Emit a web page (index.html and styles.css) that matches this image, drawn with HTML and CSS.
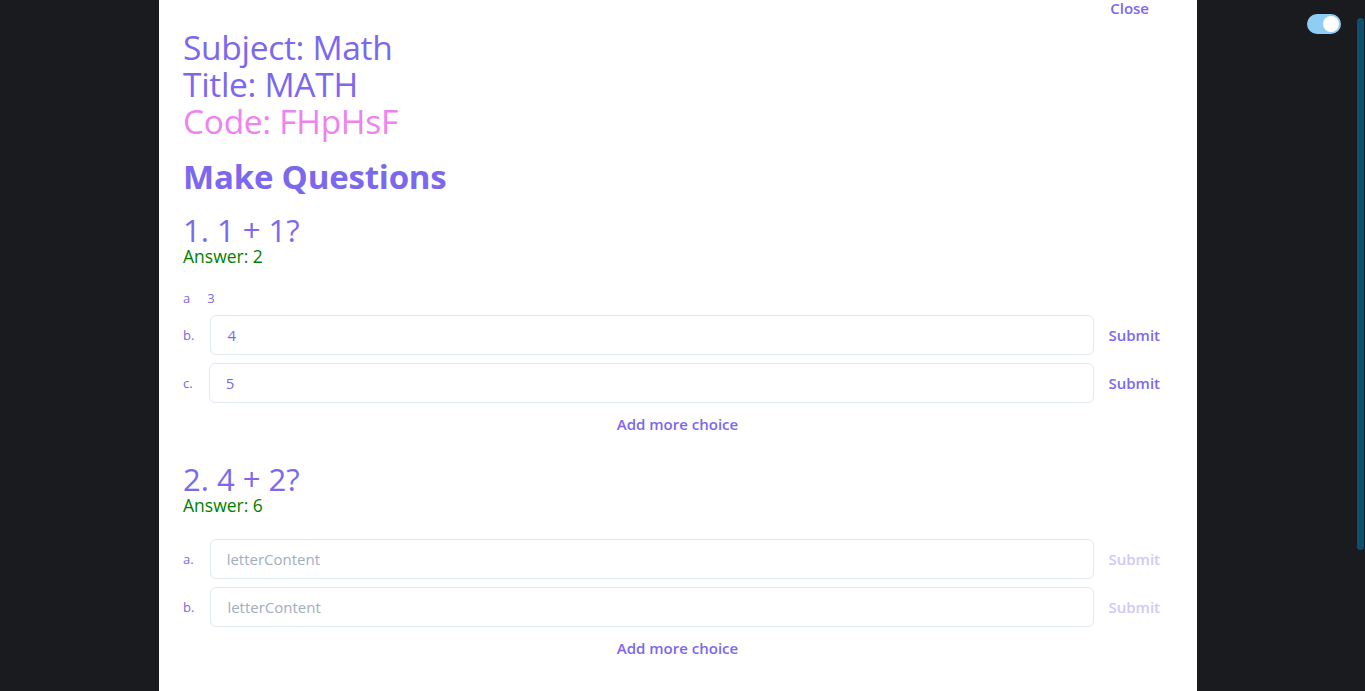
FILE: index.html
```html
<!DOCTYPE html>
<html lang="en">
<head>
<meta charset="utf-8">
<title>Make Questions</title>
<link rel="stylesheet" href="styles.css">
</head>
<body>
<div class="page">
  <div class="stage">
    <div class="modal">
      <div class="modal-top">
        <button class="close-btn">Close</button>
      </div>
      <div class="meta">
        <div class="meta-line">Subject: Math</div>
        <div class="meta-line">Title: MATH</div>
        <div class="meta-line code">Code: FHpHsF</div>
      </div>
      <h1 class="heading">Make Questions</h1>

      <section class="question">
        <div class="q-title">1. 1 + 1?</div>
        <div class="q-answer">Answer: 2</div>
        <div class="choices">
          <div class="static-choice"><span class="sc-letter">a</span><span class="sc-text">3</span></div>
          <div class="choice-row">
            <span class="letter">b.</span>
            <input class="choice-input" type="text" value="4">
            <button class="submit-btn">Submit</button>
          </div>
          <div class="choice-row">
            <span class="letter">c.</span>
            <input class="choice-input" type="text" value="5">
            <button class="submit-btn">Submit</button>
          </div>
        </div>
        <div class="add-row"><button class="add-btn">Add more choice</button></div>
      </section>

      <section class="question q2">
        <div class="q-title">2. 4 + 2?</div>
        <div class="q-answer">Answer: 6</div>
        <div class="choices spaced">
          <div class="choice-row">
            <span class="letter">a.</span>
            <input class="choice-input" type="text" placeholder="letterContent">
            <button class="submit-btn disabled">Submit</button>
          </div>
          <div class="choice-row">
            <span class="letter">b.</span>
            <input class="choice-input" type="text" placeholder="letterContent">
            <button class="submit-btn disabled">Submit</button>
          </div>
        </div>
        <div class="add-row"><button class="add-btn">Add more choice</button></div>
      </section>
    </div>
  </div>
  <div class="scrolltrack"><div class="thumb"></div></div>
</div>
<div class="toggle"><div class="knob"></div></div>
</body>
</html>
```

FILE: styles.css
```css
* { box-sizing: border-box; }
html, body { margin: 0; padding: 0; }
body {
  background: #1a1b1f;
  height: 691px;
  overflow: hidden;
  font-family: "Open Sans", "Noto Sans", sans-serif;
  color: #7b68ee;
}
.page {
  display: flex;
  height: 691px;
}
.stage {
  flex: 1;
  display: flex;
  justify-content: center;
}
.scrolltrack {
  width: 9px;
  padding: 18px 1px 0 1px;
}
.thumb {
  width: 7px;
  height: 532px;
  background: #0a5170;
  border-radius: 4px;
}
.modal {
  width: 1038px;
  background: #fff;
  padding: 0 25px 0 24px;
  height: 691px;
}
.modal-top {
  display: flex;
  justify-content: flex-end;
  height: 20px;
  padding-right: 23px;
}
.close-btn, .submit-btn, .add-btn {
  border: 0;
  background: none;
  font-family: inherit;
  font-weight: 600;
  font-size: 15px;
  color: #7b68ee;
  padding: 0;
  cursor: pointer;
}
.close-btn { height: 17px; line-height: 17px; }
.meta {
  margin-top: 9px;
}
.meta-line {
  font-size: 33.5px;
  line-height: 37px;
  letter-spacing: -0.3px;
}
.meta-line.code { color: #ee82ee; }
.heading {
  margin: 15px 0 0 0;
  font-size: 33px;
  line-height: 44px;
  font-weight: 700;
  letter-spacing: -0.2px;
}
.question { margin-top: 13px; }
.q-title {
  font-size: 31px;
  line-height: 36px;
}
.q-answer {
  color: #008000;
  font-size: 17.5px;
  line-height: 16px;
}
.choices {
  margin-top: 25px;
  display: flex;
  flex-direction: column;
  gap: 8px;
}
.choices.spaced { margin-top: 26px; }
.static-choice {
  font-size: 13px;
  line-height: 18px;
  display: flex;
  gap: 17px;
}
.choice-row {
  display: flex;
  align-items: center;
  height: 40px;
}
.letter {
  font-size: 13px;
  margin-right: 16px;
}
.choice-input {
  flex: 1;
  height: 40px;
  border: 1px solid #e2e8f0;
  border-radius: 6px;
  padding: 0 16px;
  font-family: inherit;
  font-size: 15px;
  color: #7b68ee;
  outline: none;
}
.choice-input::placeholder { color: #a0aec0; }
.submit-btn {
  width: 78px;
  height: 40px;
  text-align: right;
  padding-right: 12px;
}
.submit-btn.disabled { color: #cfc8f9; }
.add-row {
  display: flex;
  justify-content: center;
  margin-top: 11px;
}
.add-btn { height: 20px; line-height: 20px; }
.q2 { margin-top: 27px; }
.toggle {
  position: absolute;
  left: 1307px;
  top: 14px;
  width: 34px;
  height: 20px;
  border-radius: 10px;
  background: #90cdf4;
  padding: 2px;
}
.knob {
  width: 16px;
  height: 16px;
  border-radius: 50%;
  background: #fff;
  margin-left: 14px;
}
```
